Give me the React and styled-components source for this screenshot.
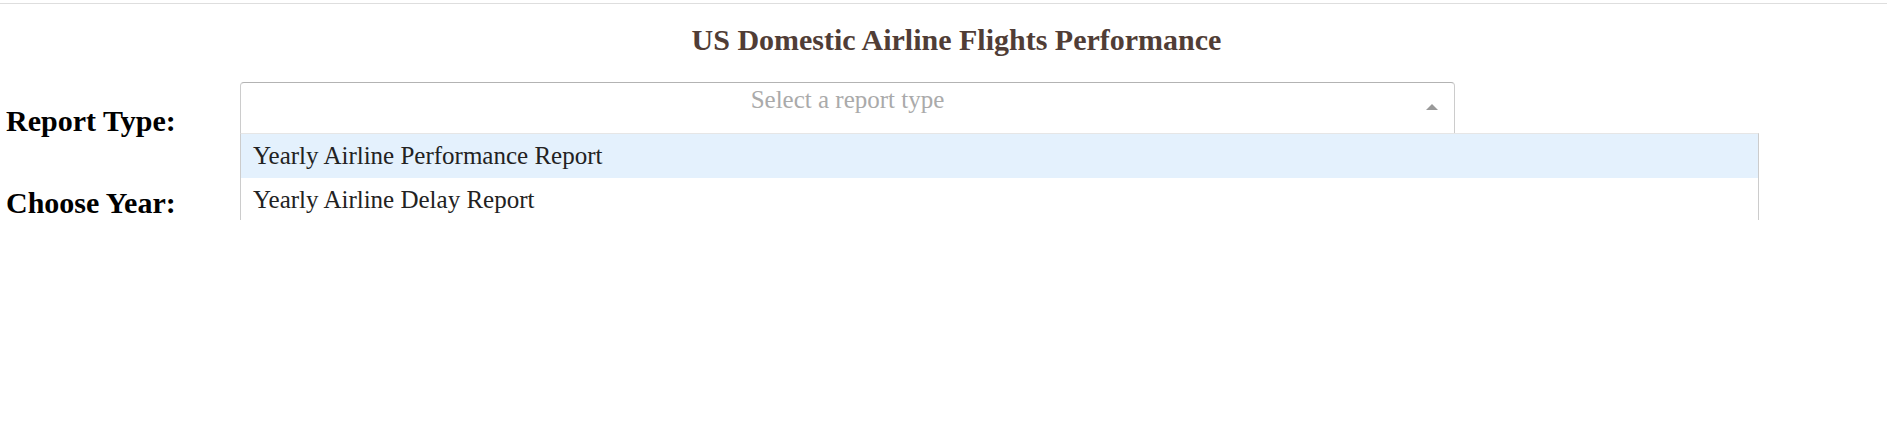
import React from "react";
import styled, { createGlobalStyle } from "styled-components";

const GlobalStyle = createGlobalStyle`
  body {
    margin: 0;
    background: #fff;
    font-family: "Liberation Serif", "Times New Roman", serif;
  }
`;

const TopRule = styled.div`
  margin-top: 3px;
  height: 1px;
  background: #dedede;
`;

const Title = styled.h1`
  margin: 19px 0 0;
  padding-left: 26px;
  font-size: 30px;
  line-height: 34px;
  font-weight: bold;
  text-align: center;
  color: #503d36;
`;

const Form = styled.div`
  margin-top: 25px;
  display: flex;
  flex-direction: column;
  gap: 26px;
`;

const Row = styled.div`
  display: flex;
  align-items: flex-start;
  padding-left: 6px;
  position: relative;
  z-index: ${(p) => p.$layer};
`;

const Label = styled.h2`
  flex: 0 0 234px;
  margin: 22px 0 0;
  font-size: 30px;
  line-height: 34px;
  font-weight: bold;
  color: #000;
`;

const Dropdown = styled.div`
  position: relative;
  width: 1215px;
  font-size: 25px;
`;

const Control = styled.div`
  position: relative;
  display: flex;
  align-items: center;
  justify-content: flex-end;
  box-sizing: border-box;
  height: ${(p) => (p.$open ? "51px" : "52px")};
  background: #fff;
  border: 1px solid #ccc;
  border-top-color: ${(p) => (p.$open ? "#b3b3b3" : "#d9d9d9")};
  border-bottom: ${(p) => (p.$open ? "none" : "1px solid #b3b3b3")};
  border-radius: ${(p) => (p.$open ? "4px 4px 0 0" : "4px")};
`;

const Placeholder = styled.div`
  position: absolute;
  left: 0;
  right: 0;
  top: 2px;
  line-height: 30px;
  text-align: center;
  color: #aaa;
`;

const ArrowZone = styled.span`
  display: flex;
  padding-right: 16px;
  margin-bottom: 3px;
`;

const Arrow = styled.span`
  width: 0;
  height: 0;
  border-left: 6px solid transparent;
  border-right: 6px solid transparent;
  ${(p) =>
    p.$up
      ? "border-bottom: 6px solid #999;"
      : "border-top: 6px solid #999;"}
`;

const Menu = styled.div`
  position: absolute;
  top: 51px;
  left: 0;
  width: 1519px;
  box-sizing: border-box;
  background: #fff;
  border: 1px solid #ccc;
  border-top-color: #e6e6e6;
  border-radius: 0 0 4px 4px;
  box-shadow: 0 1px 0 rgba(0, 0, 0, 0.06);
  overflow: hidden;
`;

const Option = styled.div`
  height: 44px;
  line-height: 44px;
  padding-left: 12px;
  color: #222;
  background: ${(p) => (p.$focused ? "#e4f1fd" : "#fff")};
`;

const reportOptions = [
  "Yearly Airline Performance Report",
  "Yearly Airline Delay Report",
];

export default function App() {
  return (
    <>
      <GlobalStyle />
      <TopRule />
      <Title>US Domestic Airline Flights Performance</Title>
      <Form>
        <Row $layer={2}>
          <Label>Report Type:</Label>
          <Dropdown>
            <Control $open>
              <Placeholder>Select a report type</Placeholder>
              <ArrowZone>
                <Arrow $up />
              </ArrowZone>
            </Control>
            <Menu>
              {reportOptions.map((o, i) => (
                <Option key={o} $focused={i === 0}>
                  {o}
                </Option>
              ))}
            </Menu>
          </Dropdown>
        </Row>
        <Row $layer={1}>
          <Label>Choose Year:</Label>
          <Dropdown>
            <Control>
              <Placeholder>Select a year</Placeholder>
              <ArrowZone>
                <Arrow />
              </ArrowZone>
            </Control>
          </Dropdown>
        </Row>
      </Form>
    </>
  );
}
